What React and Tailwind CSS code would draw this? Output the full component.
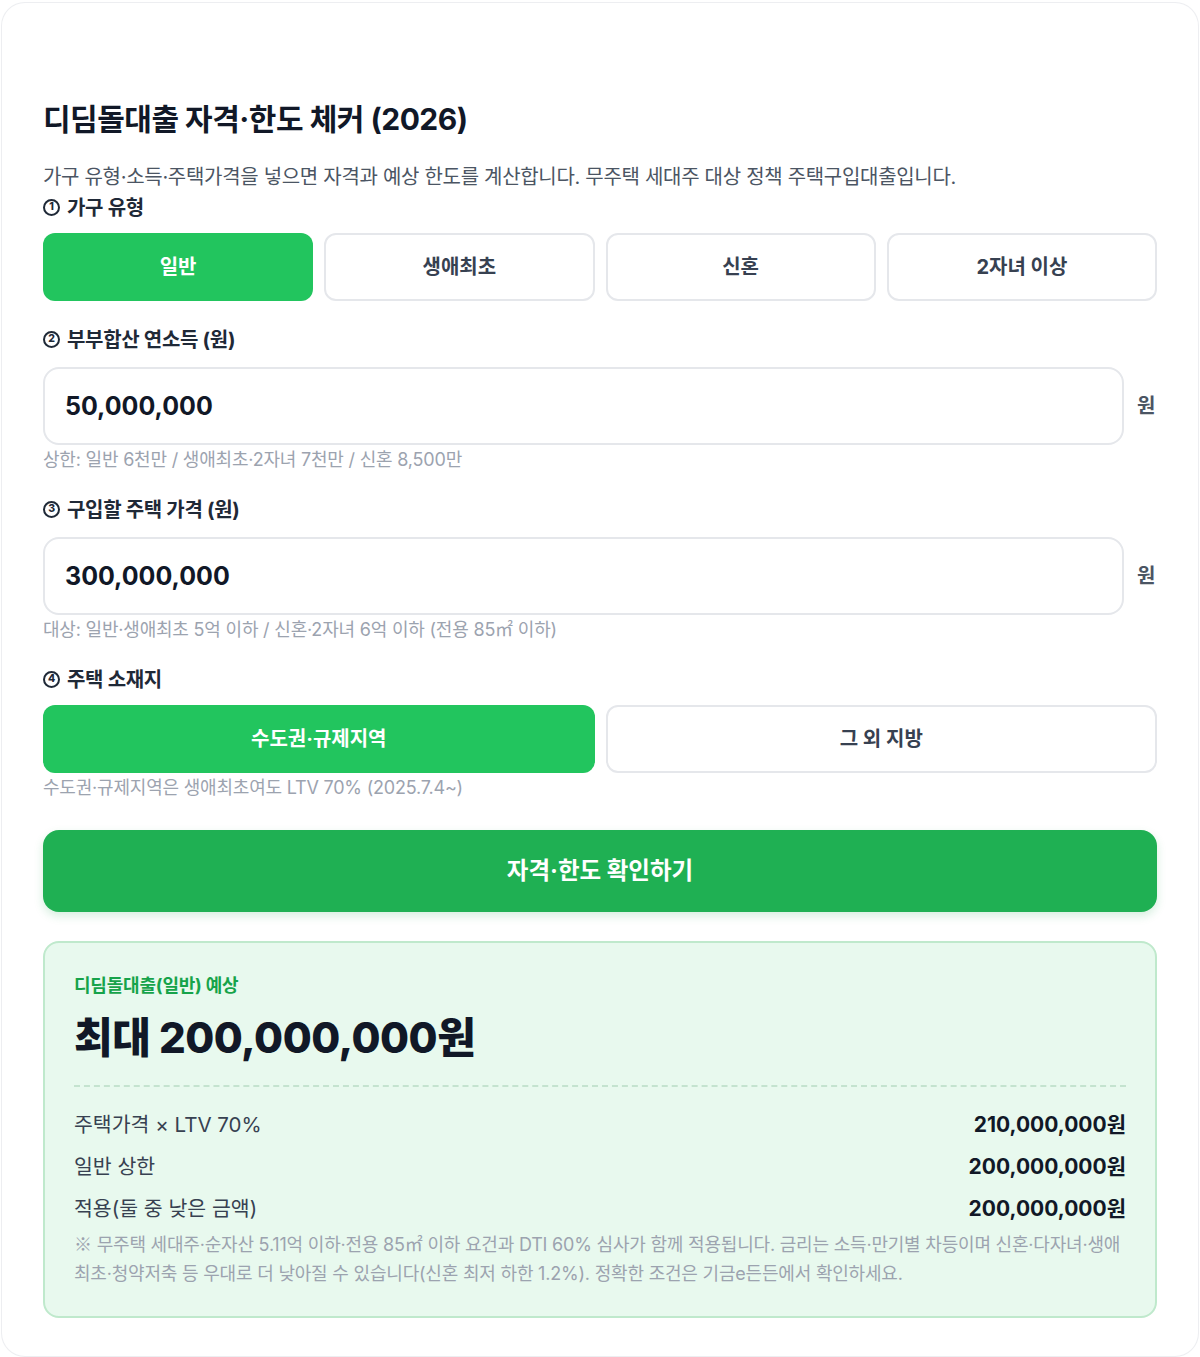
import React, { useState } from "react";

const householdTypes = ["일반", "생애최초", "신혼", "2자녀 이상"];
const regions = ["수도권·규제지역", "그 외 지방"];

const Num = ({ n }) => (
  <span className="mr-[7px] inline-flex h-[17px] w-[17px] translate-y-[-2px] items-center justify-center rounded-full border-2 border-current align-middle text-[10.5px] font-extrabold leading-none">
    {n}
  </span>
);

const Label = ({ n, children, className = "" }) => (
  <p className={`text-[20px] font-bold leading-[30px] tracking-[-0.3px] text-[#1f2937] ${className}`}>
    <Num n={n} />
    {children}
  </p>
);

const App = () => {
  const [household, setHousehold] = useState("일반");
  const [region, setRegion] = useState("수도권·규제지역");
  const [income, setIncome] = useState("50,000,000");
  const [price, setPrice] = useState("300,000,000");

  return (
    <div
      className="min-h-screen bg-white p-[1px] pt-[2px]"
      style={{ fontFamily: 'Inter, "Noto Sans CJK KR", sans-serif' }}
    >
      <div className="rounded-[24px] border border-gray-200/70 bg-white px-[41px] pt-[95px] pb-[38px]">
        {/* Header */}
        <h1 className="text-[30px] font-bold leading-[42px] tracking-[-0.5px] text-[#111827]">
          디딤돌대출 자격·한도 체커 (2026)
        </h1>
        <p className="mt-[21px] text-[20px] leading-[32px] tracking-[-0.3px] text-[#4b5563]">
          가구 유형·소득·주택가격을 넣으면 자격과 예상 한도를 계산합니다. 무주택 세대주 대상 정책 주택구입대출입니다.
        </p>

        {/* 1. household */}
        <Label n="1">가구 유형</Label>
        <div className="mt-[10px] grid grid-cols-4 gap-[11px]">
          {householdTypes.map((t) => (
            <button
              key={t}
              onClick={() => setHousehold(t)}
              className={`h-[68px] rounded-[12px] text-[20px] font-bold ${
                household === t
                  ? "bg-[#22c55e] text-white"
                  : "border-2 border-[#e5e7eb] bg-white text-[#374151]"
              }`}
            >
              {t}
            </button>
          ))}
        </div>

        {/* 2. income */}
        <Label n="2" className="mt-[24px]">부부합산 연소득 (원)</Label>
        <div className="mt-[12px] flex items-center gap-[13px]">
          <input
            value={income}
            onChange={(e) => setIncome(e.target.value)}
            className="h-[78px] flex-1 rounded-[16px] border-2 border-[#e5e7eb] px-[20px] text-[25px] font-bold text-[#111827] outline-none"
          />
          <span className="w-[20px] text-[20px] font-bold text-[#4b5563]">원</span>
        </div>
        <p className="mt-[4px] text-[18px] leading-[22px] tracking-[-0.2px] text-[#9ca3af]">
          상한: 일반 6천만 / 생애최초·2자녀 7천만 / 신혼 8,500만
        </p>

        {/* 3. price */}
        <Label n="3" className="mt-[24px]">구입할 주택 가격 (원)</Label>
        <div className="mt-[12px] flex items-center gap-[13px]">
          <input
            value={price}
            onChange={(e) => setPrice(e.target.value)}
            className="h-[78px] flex-1 rounded-[16px] border-2 border-[#e5e7eb] px-[20px] text-[25px] font-bold text-[#111827] outline-none"
          />
          <span className="w-[20px] text-[20px] font-bold text-[#4b5563]">원</span>
        </div>
        <p className="mt-[4px] text-[18px] leading-[22px] tracking-[-0.2px] text-[#9ca3af]">
          대상: 일반·생애최초 5억 이하 / 신혼·2자녀 6억 이하 (전용 85㎡ 이하)
        </p>

        {/* 4. region */}
        <Label n="4" className="mt-[24px]">주택 소재지</Label>
        <div className="mt-[10px] grid grid-cols-2 gap-[11px]">
          {regions.map((r) => (
            <button
              key={r}
              onClick={() => setRegion(r)}
              className={`h-[68px] rounded-[12px] text-[20px] font-bold ${
                region === r
                  ? "bg-[#22c55e] text-white"
                  : "border-2 border-[#e5e7eb] bg-white text-[#374151]"
              }`}
            >
              {r}
            </button>
          ))}
        </div>
        <p className="mt-[4px] text-[18px] leading-[22px] tracking-[-0.2px] text-[#9ca3af]">
          수도권·규제지역은 생애최초여도 LTV 70% (2025.7.4~)
        </p>

        {/* Submit */}
        <button className="mt-[31px] h-[82px] w-full rounded-[16px] bg-[#1fb053] text-[23.5px] font-bold text-white shadow-[0_4px_10px_rgba(22,163,74,0.18)]">
          자격·한도 확인하기
        </button>

        {/* Result */}
        <div className="mt-[29px] rounded-[16px] border-2 border-[#bfe9cc] bg-[#e8f9ee] px-[29px] pt-[30px] pb-[28px]">
          <p className="text-[18px] font-bold leading-[26px] tracking-[-0.2px] text-[#16a34a]">디딤돌대출(일반) 예상</p>
          <p className="mt-[14px] text-[42px] font-extrabold leading-[50px] tracking-[-0.5px] text-[#111827]">
            최대 200,000,000원
          </p>
          <div className="mt-[22px] border-t-2 border-dashed border-[#c4e3cf]" />
          <div className="mt-[23px] space-y-[12px]">
            {[
              ["주택가격 × LTV 70%", "210,000,000원"],
              ["일반 상한", "200,000,000원"],
              ["적용(둘 중 낮은 금액)", "200,000,000원"],
            ].map(([k, v]) => (
              <div key={k} className="flex items-center justify-between leading-[30px]">
                <span className="text-[20.5px] text-[#374151]">{k}</span>
                <span className="text-[21px] font-bold text-[#111827]">{v}</span>
              </div>
            ))}
          </div>
          <p className="mt-[5px] text-[18px] leading-[29px] tracking-[-0.2px] text-[#9ca3af]">
            <span className="font-['Noto_Sans_CJK_KR']">※</span> 무주택 세대주·순자산 5.11억 이하·전용 85㎡ 이하 요건과 DTI 60% 심사가 함께 적용됩니다. 금리는 소득·만기별 차등이며 신혼·다자녀·생애최초·청약저축 등 우대로 더 낮아질 수 있습니다(신혼 최저 하한 1.2%). 정확한 조건은 기금e든든에서 확인하세요.
          </p>
        </div>
      </div>
    </div>
  );
};

export default App;
